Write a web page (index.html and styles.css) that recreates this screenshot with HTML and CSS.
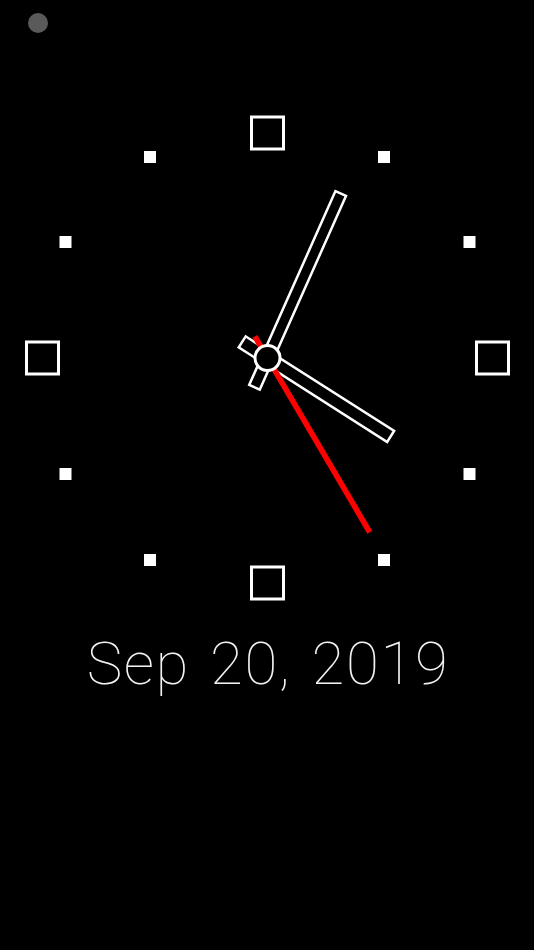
FILE: index.html
```html
<!DOCTYPE html>
<html>
<head>
<meta charset="utf-8">
<link rel="stylesheet" href="styles.css">
</head>
<body>
<div class="screen">
  <div class="dot"></div>
  <svg class="clock" width="534" height="500" viewBox="0 0 534 500">
    <g transform="translate(267.5 250)">
      <g class="marks-big" fill="none" stroke="#fff" stroke-width="3">
        <rect x="-16" y="-241" width="32" height="32"/>
        <rect x="-16" y="209" width="32" height="32"/>
        <rect x="-241" y="-16" width="32" height="32"/>
        <rect x="209" y="-16" width="32" height="32"/>
      </g>
      <g class="marks-small" fill="#fff">
        <rect x="110.5" y="-207" width="12" height="12"/>
        <rect x="196" y="-122" width="12" height="12"/>
        <rect x="196" y="110" width="12" height="12"/>
        <rect x="110.5" y="196" width="12" height="12"/>
        <rect x="-123.5" y="196" width="12" height="12"/>
        <rect x="-208" y="110" width="12" height="12"/>
        <rect x="-208" y="-122" width="12" height="12"/>
        <rect x="-123.5" y="-207" width="12" height="12"/>
      </g>
      <g transform="rotate(122.5)">
        <rect x="-6.5" y="-146" width="13" height="176" fill="#000" stroke="#fff" stroke-width="2.5"/>
      </g>
      <g transform="rotate(24)">
        <rect x="-5.8" y="-180" width="11.6" height="212" fill="#000" stroke="#fff" stroke-width="2.5"/>
      </g>
      <g transform="rotate(149.6)">
        <rect x="-2.8" y="-202" width="5.6" height="227" fill="#ff0000"/>
      </g>
      <circle cx="0" cy="0" r="12.5" fill="#000" stroke="#fff" stroke-width="3"/>
    </g>
  </svg>
  <div class="date">Sep 20, 2019</div>
</div>
</body>
</html>
```

FILE: styles.css
```css
html, body {
  margin: 0;
  padding: 0;
  background: #000;
}
.screen {
  width: 534px;
  height: 950px;
  background: #000;
  display: flex;
  flex-direction: column;
}
.dot {
  width: 20px;
  height: 20px;
  border-radius: 50%;
  background: #5a5a5a;
  margin: 12.5px 0 0 28px;
}
.clock {
  display: block;
  margin-top: 75px;
}
.date {
  font-family: Roboto, "Liberation Sans", sans-serif;
  font-weight: 100;
  font-size: 60px;
  line-height: 70px;
  color: #f2f2f2;
  text-align: center;
  margin-top: 21px;
  padding-left: 2px;
  letter-spacing: 1.6px;
  word-spacing: 4px;
}
```
